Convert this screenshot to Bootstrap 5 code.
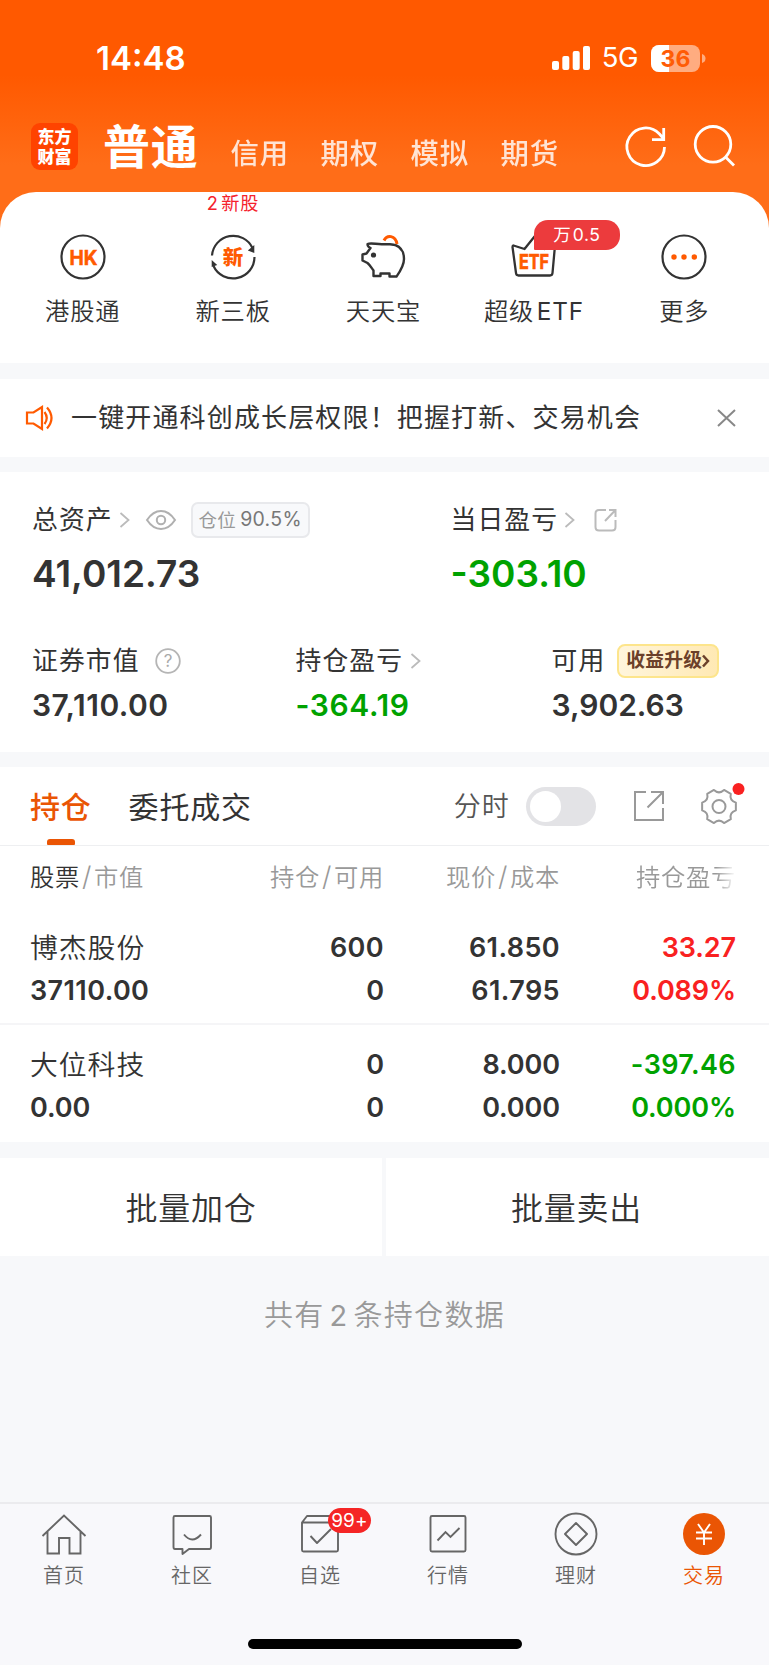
<!DOCTYPE html>
<html lang="zh-CN">
<head>
<meta charset="utf-8">
<meta name="viewport" content="width=device-width, initial-scale=1">
<title>交易</title>
<link href="https://cdn.jsdelivr.net/npm/bootstrap@5.3.0/dist/css/bootstrap.min.css" rel="stylesheet">
<style>
  body { font-family: Inter, "Noto Sans CJK SC", sans-serif; color: #333; background: #f7f8fa; line-height: 1; width: 769px; height: 1665px; overflow: hidden; white-space: nowrap; }
  svg { display: block; flex: none; overflow: visible; }
  .hero { height: 232px; background: linear-gradient(#ff5900 0, #ff5900 75px, #ff6d18 165px, #ff6d18); color: #fff; }
  .status { height: 54px; padding: 0 64px 0 96px; margin-top: 31px; }
  .clock { font-size: 33px; font-weight: 600; }
  .net { font-size: 27.5px; letter-spacing: -.5px; margin: 0 13px 0 12px; }
  .heads { height: 60px; margin-top: 31px; padding: 0 34px 0 31px; }
  .logo { width: 47px; height: 47px; border-radius: 9px; background: #ff4300; font: 900 17px/20px "Noto Sans CJK SC", sans-serif; text-align: center; padding-top: 3px; }
  .big { font-size: 47px; font-weight: 700; letter-spacing: .8px; margin-left: 25px; }
  .alt { font-size: 28.4px; font-weight: 500; letter-spacing: .8px; width: 90px; opacity: .82; padding-top: 16px; }
  .sheet { height: 171px; margin-top: -40px; border-radius: 36px 36px 0 0; background: #fff; padding: 28px 0 0 7.5px; }
  .quick { width: 150.4px; }
  .quick .tile { position: relative; width: 50px; height: 74px; }
  .quick b { font-weight: 350; font-size: 24.3px; letter-spacing: .8px; line-height: 34px; word-spacing: -5px; }
  .quick b i { font-style: normal; font-weight: 400; }
  .hint { position: absolute; top: -29px; left: 50%; transform: translateX(-50%); font-size: 18.2px; letter-spacing: .9px; word-spacing: -3.5px; line-height: 24px; color: #f5222d; }
  .promo { position: absolute; left: 25px; top: 0; width: 86px; height: 30px; border-radius: 14px 14px 14px 1px; background: #ec3b3d; color: #fff; font-size: 17.5px; letter-spacing: .6px; word-spacing: -4px; line-height: 30px; text-align: center; }
  .block { background: #fff; margin-top: 15px; }
  .notice { height: 78px; margin-top: 16px; padding: 0 33px 0 25px; font-size: 26px; letter-spacing: 1.15px; }
  .assets { height: 280px; padding: 30px 0 0 32px; }
  .lab { font-size: 25.8px; letter-spacing: 1.1px; height: 36px; }
  .money { font-size: 37px; font-weight: 600; height: 44px; line-height: 44px; margin-top: 14px; }
  .sub2 { font-size: 30px; font-weight: 600; height: 36px; line-height: 36px; margin-top: 8px; }
  .stake { height: 36px; width: 119px; border: 2px solid #e8e9ec; border-radius: 7px; background: #f8f9fb; font-size: 18.5px; letter-spacing: .3px; color: #999; }
  .stake i { font-style: normal; color: #777; margin-left: 4px; font-size: 19.5px; }
  .up { width: 102px; height: 34px; border: 2px solid #fde58c; border-radius: 8px; background: linear-gradient(90deg, #fff5dc, #ffe9b4); color: #6b402a; font-size: 18.8px; font-weight: 700; letter-spacing: .2px; }
  .green { color: #00a200; } .red { color: #f92121; }
  .tabs { height: 79px; padding-left: 30px; border-bottom: 1px solid #eeeff1; }
  .on { position: relative; color: #ea5504; font-weight: 500; }
  .on::after { content: ""; position: absolute; left: 17px; bottom: 1px; width: 28px; height: 6px; border-radius: 3px 3px 1px 1px; background: #ea5504; }
  .tabx { font-size: 30px; letter-spacing: .8px; line-height: 80px; height: 79px; }
  .toggle { width: 70px; height: 39px; border-radius: 20px; background: #e3e3e6; padding: 4px; }
  .toggle span { display: block; width: 31px; height: 31px; border-radius: 50%; background: #fff; }
  .line4 { display: grid; grid-template-columns: 194px 160px 176px 176px; padding-left: 30px; text-align: right; }
  .line4 > :first-child { text-align: left; }
  .th4 { height: 63px; line-height: 62px; font-size: 24.3px; letter-spacing: .7px; color: #999; font-weight: 350; }
  .th4 s { text-decoration: none; font-size: 27px; padding: 0 2px; font-weight: 300; }
  .fade-end { -webkit-mask-image: linear-gradient(90deg, #000 80%, transparent 100%); mask-image: linear-gradient(90deg, #000 80%, transparent 100%); }
  .td4 { height: 117px; padding-top: 19px; font-size: 27px; font-weight: 600; letter-spacing: -.1px; line-height: 42.5px; }
  .td4:not(:last-child) { height: 116px; padding-top: 18px; border-bottom: 2px solid #f5f5f7; }
  .td4 .nm { font-size: 27.8px; font-weight: 350; letter-spacing: 1px; }
  .wide { letter-spacing: .4px; }
  .act { height: 98px; line-height: 101px; background: #fff; text-align: center; font-size: 32px; letter-spacing: .8px; font-weight: 350; }
  .total { margin-top: 43px; height: 34px; line-height: 34px; font-size: 29px; letter-spacing: 1.3px; word-spacing: -4.5px; color: #999; text-align: center; font-weight: 350; }
  .total i { font-style: normal; font-weight: 400; }
  .dock { margin-top: 169px; border-top: 2px solid #ebebee; background: #f8f8fb; height: 163px; color: #666; padding-top: 8px; }
  .dock .cell { position: relative; width: 128px; font-size: 20px; letter-spacing: 1px; font-weight: 350; line-height: 26px; }
  .dock svg { margin-bottom: 7px; }
  .count { position: absolute; left: 72px; top: -4px; width: 43px; height: 25px; border-radius: 13px; background: #f52525; color: #fff; font-size: 19px; letter-spacing: .2px; line-height: 26px; text-align: center; font-weight: 400; }
  .homebar { width: 274px; height: 10px; border-radius: 5px; background: #000; margin: 50px auto 0; }
</style>
</head>
<body>
<header class="hero d-flow-root overflow-hidden">
  <div class="status d-flex align-items-center">
    <span class="clock">14:48</span>
    <svg class="ms-auto" width="38" height="24" fill="#fff"><rect y="15" width="7" height="9" rx="2"/><rect x="10.3" y="10" width="7" height="14" rx="2"/><rect x="20.7" y="5" width="7" height="19" rx="2"/><rect x="31" width="7" height="24" rx="2"/></svg>
    <span class="net">5G</span>
    <svg width="54" height="27"><defs><clipPath id="bat"><rect width="49" height="27" rx="8"/></clipPath></defs><g clip-path="url(#bat)"><rect width="49" height="27" fill="#fff" fill-opacity=".5"/><rect width="18" height="27" fill="#fff"/></g><path d="M51 9q3.500 1 3.500 4.500t-3.500 4.500z" fill="#fff" fill-opacity=".5"/><text x="24.500" y="21.800" text-anchor="middle" font-size="23" font-weight="700" fill="#ff5c05">36</text></svg>
  </div>
  <div class="heads d-flex align-items-center">
    <div class="logo">东方<br>财富</div>
    <span class="big">普通</span>
    <div class="d-flex" style="margin-left:32px"><span class="alt">信用</span><span class="alt">期权</span><span class="alt">模拟</span><span class="alt">期货</span></div>
    <svg class="ms-auto" width="110" height="46" fill="none" stroke="#fff" stroke-width="2.800"><path d="M39.500 24A18.800 18.800 0 1 1 34.500 11L38.500 15.500M38.700 5v11.700H27"/><circle cx="88" cy="21.300" r="17.800"/><path d="M100.500 34l8.500 8.500"/></svg>
  </div>
</header>
<section class="sheet d-flex position-relative">
  <div class="quick d-flex flex-column align-items-center"><div class="tile"><svg width="50" height="74"><circle cx="25" cy="37" r="21.500" fill="none" stroke="#333" stroke-width="2.200"/><text x="11.500" y="44.800" font-size="20.500" font-weight="700" fill="#ff5a00" stroke="#ff5a00" stroke-width=".5" textLength="28" lengthAdjust="spacingAndGlyphs">HK</text></svg></div><b>港股通</b></div>
  <div class="quick d-flex flex-column align-items-center"><div class="tile"><span class="hint">2 新股</span><svg width="50" height="74"><g fill="none" stroke="#333" stroke-width="2.200"><path d="M4 35.500A21.300 21.300 0 0 1 44.500 28M46.500 37A21.500 21.500 0 0 1 5.500 46"/></g><path d="M46.300 25v8l-6.500-2.500zM3.700 40l5.500 5-5.500 2z" fill="#333"/><text x="25" y="44.500" text-anchor="middle" font-size="20.500" font-weight="900" fill="#ff5a00">新</text></svg></div><b>新三板</b></div>
  <div class="quick d-flex flex-column align-items-center"><div class="tile"><svg width="50" height="74"><g fill="none" stroke-width="2.400" stroke-linejoin="round"><path d="M9.500 24C13 22.500 18 24.300 24 24.200H32C42 24.500 46 31 46 39C46 46 42 51.500 38.500 56.500H31.500V53.500H22.500V56H15.500V50.500C13.500 48 12 45 9.500 43L4.500 40.500V34.500L8.500 33.500L12.500 28C10 27 9.500 25.500 9.500 24Z" stroke="#333"/><path d="M26 20.500C29 14.500 37.500 15 39 24" stroke="#ff5a00" stroke-width="3"/></g><circle cx="15.500" cy="35" r="2.600" fill="#333"/></svg></div><b>天天宝</b></div>
  <div class="quick d-flex flex-column align-items-center"><div class="tile"><svg width="50" height="74"><path d="M4.500 25.500L15.500 29L25.500 16.500L35.500 29L46 25.500L43.500 53Q43.300 55.500 41 55.500H9.500Q7.200 55.500 7 53L3.500 27Q3.500 25.500 4.500 25.500Z" fill="none" stroke="#333" stroke-width="2.300" stroke-linejoin="round"/><text x="10" y="48.700" font-size="20.500" font-weight="700" fill="#ff5a00" stroke="#ff5a00" stroke-width=".7" textLength="30" lengthAdjust="spacingAndGlyphs">ETF</text></svg><span class="promo">万 0.5</span></div><b>超级 <i>ETF</i></b></div>
  <div class="quick d-flex flex-column align-items-center"><div class="tile"><svg width="50" height="74"><circle cx="25" cy="37" r="21.500" fill="none" stroke="#333" stroke-width="2.200"/><g fill="#ff5a00"><circle cx="15" cy="37" r="2.700"/><circle cx="25" cy="37" r="2.700"/><circle cx="35.300" cy="37" r="2.700"/></g></svg></div><b>更多</b></div>
</section>
<section class="block notice d-flex align-items-center">
  <svg width="46" height="26" fill="none" stroke="#ff5a00" stroke-width="2.200"><path d="M2 7.500h6.500L17 2v22l-8.500-5.500H2z"/><path d="M19.500 7q4.500 6 0 12M22 2.500q9 10.500 0 21"/></svg>
  <span>一键开通科创成长层权限！把握打新、交易机会</span>
  <svg class="ms-auto" width="19" height="18" stroke="#888" stroke-width="2"><path d="M1 1l17 16M18 1L1 17"/></svg>
</section>
<section class="block assets">
  <div class="d-flex">
    <div style="width:418.500px">
      <div class="lab d-flex align-items-center">总资产
        <svg style="margin-left:6px" width="11" height="16" fill="none" stroke="#bbb" stroke-width="1.800"><path d="M1.500 1l8 7-8 7"/></svg>
        <svg style="margin-left:16px" width="30" height="20" fill="none" stroke="#b0b0b0" stroke-width="2"><path d="M1 10Q7 1 15 1t14 9q-6 9-14 9T1 10z"/><circle cx="15" cy="10" r="4.200"/></svg>
        <div class="stake d-flex align-items-center justify-content-center" style="margin-left:15px">仓位<i>90.5%</i></div></div>
      <div class="money">41,012.73</div>
    </div>
    <div>
      <div class="lab d-flex align-items-center">当日盈亏
        <svg style="margin-left:6px" width="11" height="16" fill="none" stroke="#bbb" stroke-width="1.800"><path d="M1.500 1l8 7-8 7"/></svg>
        <svg style="margin-left:19px" width="23" height="24" fill="none" stroke="#bbb" stroke-width="2"><path d="M12 2H5Q1.500 2 1.500 5.500V19Q1.500 22.500 5 22.500H18Q21.500 22.500 21.500 19V12M15 2h6.500v7M21.500 2L11 13"/></svg></div>
      <div class="money green">-303.10</div>
    </div>
  </div>
  <div class="d-flex" style="margin-top:47px">
    <div style="width:263.500px"><div class="lab d-flex align-items-center">证券市值
      <svg style="margin-left:15px" width="26" height="26"><circle cx="13" cy="13" r="11.800" fill="none" stroke="#b5b5b5" stroke-width="1.800"/><text x="13" y="19" text-anchor="middle" font-size="17" letter-spacing="0" fill="#aaa">?</text></svg></div><div class="sub2" style="letter-spacing:.5px">37,110.00</div></div>
    <div style="width:256px"><div class="lab d-flex align-items-center">持仓盈亏<svg style="margin-left:7px" width="11" height="16" fill="none" stroke="#bbb" stroke-width="1.800"><path d="M1.500 1l8 7-8 7"/></svg></div><div class="sub2 green" style="letter-spacing:.6px">-364.19</div></div>
    <div><div class="lab d-flex align-items-center">可用<div class="up d-flex align-items-center justify-content-center" style="margin-left:12px">收益升级<svg width="8" height="14" fill="none" stroke="#6b402a" stroke-width="2.500"><path d="M1 1.500L6 7l-5 5.500"/></svg></div></div><div class="sub2">3,902.63</div></div>
  </div>
</section>
<section class="block">
  <div class="tabs d-flex align-items-center">
    <span class="tabx on">持仓</span><span class="tabx" style="margin-left:37px">委托成交</span>
    <span style="font-size:27px;letter-spacing:1px;line-height:30px;padding-top:2px;color:#555;font-weight:350;margin-left:202px">分时</span>
    <div class="toggle" style="margin-left:16px"><span></span></div>
    <svg style="margin-left:37px" width="32" height="32" fill="none" stroke="#999" stroke-width="2"><path d="M13 2H2v28h28V18M18 2h12v12M30 2L14.500 17.500"/></svg>
    <div class="position-relative" style="margin-left:34px"><svg width="40" height="40"><g transform="translate(20 20.500)" fill="none" stroke="#999" stroke-width="2" stroke-linejoin="round"><path d="M16.860-3.890V3.890Q10.200 5.900 11.800 12.650L5.060 16.540Q0 11.800-5.060 16.540L-11.800 12.650Q-10.200 5.900-16.860 3.890V-3.890Q-10.200-5.900-11.800-12.650L-5.060-16.540Q0-11.800 5.060-16.540L11.800-12.650Q10.200-5.900 16.860-3.890Z"/><circle r="6.500"/></g><circle cx="39.500" cy="3" r="6" fill="#f92121"/></svg></div>
  </div>
  <div class="line4 th4"><div><span style="color:#333">股票</span><s>/</s>市值</div><div>持仓<s>/</s>可用</div><div>现价<s>/</s>成本</div><div><span class="fade-end">持仓盈亏</span></div></div>
  <div>
    <div class="line4 td4"><div><div class="nm">博杰股份</div><span class="wide">37110.00</span></div><div><span class="wide">600</span><br>0</div><div class="wide">61.850<br>61.795</div><div class="red">33.27<br>0.089%</div></div>
    <div class="line4 td4"><div><div class="nm">大位科技</div>0.00</div><div>0<br>0</div><div>8.000<br>0.000</div><div class="green"><span class="wide">-397.46</span><br>0.000%</div></div>
  </div>
</section>
<section class="d-flex" style="gap:4px;margin-top:16px"><div class="act" style="width:382px">批量加仓</div><div class="act flex-fill" style="padding-right:2px">批量卖出</div></section>
<div class="total">共有 <i>2</i> 条持仓数据</div>
<nav class="dock">
  <div class="d-flex text-center">
    <div class="cell d-flex flex-column align-items-center"><svg width="44" height="44" fill="none" stroke="#666" stroke-width="1.900"><path d="M.500 24L22 3.500L43.500 24M5.500 20V41.500H17V26H27.500V41.500H38.500V20"/></svg>首页</div>
    <div class="cell d-flex flex-column align-items-center"><svg width="44" height="44" fill="none" stroke="#666" stroke-width="1.900" stroke-linejoin="round"><path d="M5 4H39.500Q41 4 41 5.500V35Q41 37 39.500 37H19L12.500 42V37H5Q3.500 37 3.500 35V5.500Q3.500 4 5 4zM14 22.500q8 10 17 0"/></svg>社区</div>
    <div class="cell d-flex flex-column align-items-center"><svg width="44" height="44" fill="none" stroke="#666" stroke-width="1.900" stroke-linejoin="round"><path d="M4 10.500L9 4H35L40 10.500V38Q40 39.500 38.500 39.500H5.500Q4 39.500 4 38V10.500H40M12.500 24L19 31L33 17"/></svg>自选<span class="count">99+</span></div>
    <div class="cell d-flex flex-column align-items-center"><svg width="44" height="44" fill="none" stroke="#666" stroke-width="1.900"><rect x="4.500" y="4" width="35" height="35.500" rx="1.500"/><path d="M11.500 28.500L19.500 20L24.500 25L33.500 16"/></svg>行情</div>
    <div class="cell d-flex flex-column align-items-center"><svg width="44" height="44" fill="none" stroke="#666" stroke-width="1.900"><circle cx="22" cy="22" r="20.500"/><path d="M22 11L33 22L22 33L11 22Z" stroke-linejoin="round"/></svg>理财</div>
    <div class="cell d-flex flex-column align-items-center" style="color:#ea5504"><svg width="44" height="44"><circle cx="22" cy="22" r="21" fill="#ea5504"/><path d="M16 12L22 20.500L28 12M22 20.500V33M14 20.500H30M14 26.500H30" fill="none" stroke="#fff" stroke-width="1.900"/></svg>交易</div>
  </div>
  <div class="homebar"></div>
</nav>
<script src="https://cdn.jsdelivr.net/npm/bootstrap@5.3.0/dist/js/bootstrap.bundle.min.js"></script>
</body>
</html>
